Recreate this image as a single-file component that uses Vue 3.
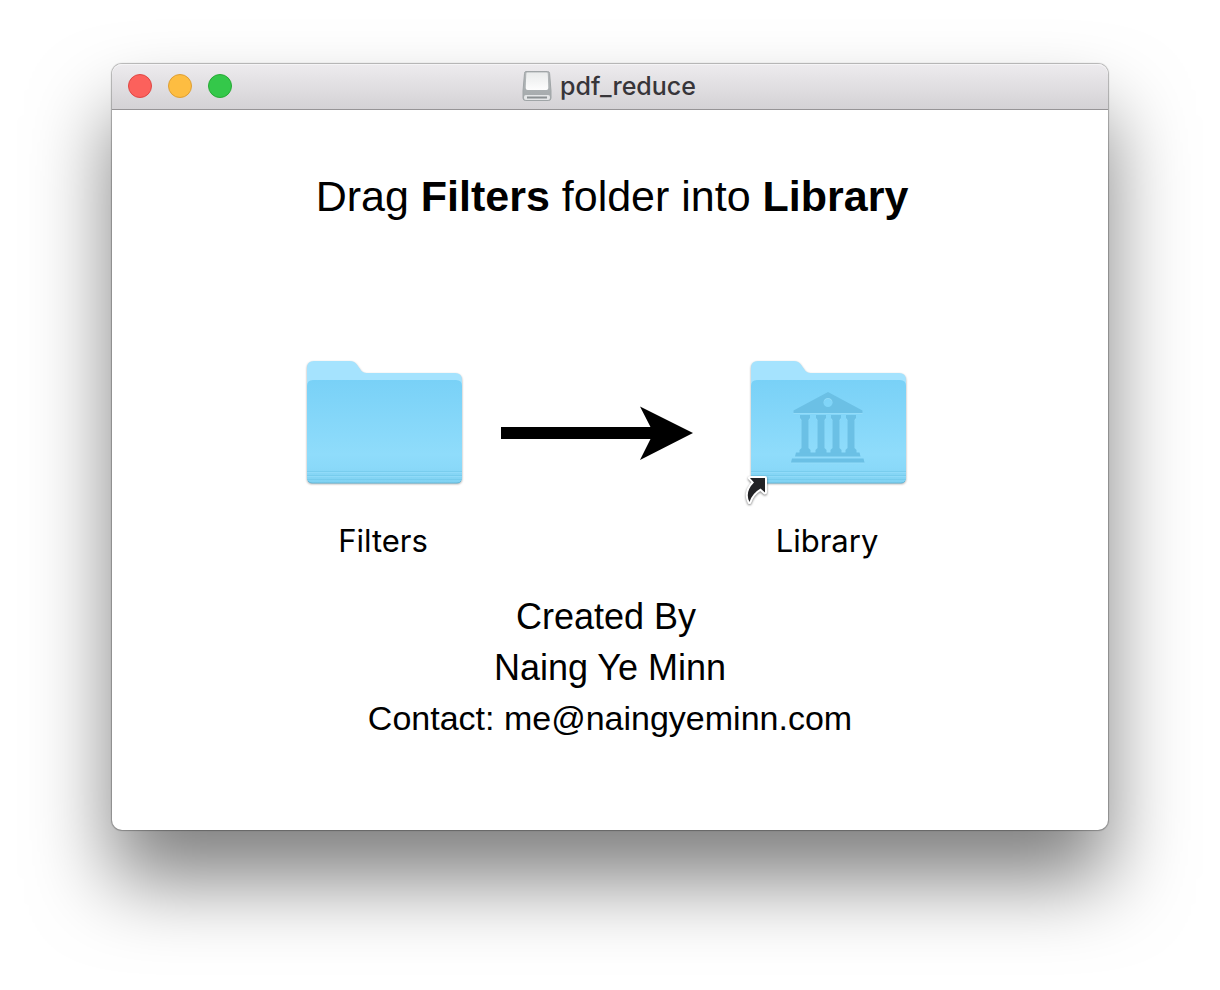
<script setup>
const credits = [
  { text: 'Created By', kind: 'caption' },
  { text: 'Naing Ye Minn', kind: 'author' },
  { text: 'Contact: me@naingyeminn.com', kind: 'contact' },
]
const columns = [56, 72, 87, 102]
const controls = [
  { name: 'Close', tone: 'close' },
  { name: 'Minimize', tone: 'minimize' },
  { name: 'Zoom', tone: 'zoom' },
]
const folders = [
  { name: 'Filters', library: false },
  { name: 'Library', library: true },
]
</script>

<template>
  <main class="desktop">
    <section class="window" aria-labelledby="window-title">
      <header class="titlebar">
        <div class="controls">
          <button v-for="c in controls" :key="c.name" type="button" :class="['control', c.tone]" :aria-label="c.name"></button>
        </div>
        <div class="title">
          <svg class="drive" width="30" height="32" viewBox="0 0 30 32" aria-hidden="true">
            <defs>
              <linearGradient id="drive-top" x1="0" y1="0" x2="0" y2="1">
                <stop offset="0" stop-color="#e9ebeb" />
                <stop offset="1" stop-color="#fdfdfd" />
              </linearGradient>
              <linearGradient id="drive-side" x1="0" y1="0" x2="0" y2="1">
                <stop offset="0" stop-color="#b4b8ba" />
                <stop offset="1" stop-color="#a4a9ab" />
              </linearGradient>
            </defs>
            <path d="M4 1.500h21.500q2 0 2.100 2L29 21v7q0 2.500-2.500 2.500h-23Q1 30.500 1 28v-7L2.500 3.500q.1-2 1.500-2z" fill="url(#drive-side)" stroke="#a0a5a7" />
            <path d="M5.500 2.500h19q1.200 0 1.300 1.200L26.300 18q0 2-2 2H5.700q-2 0-2-2L4.300 3.700q.1-1.200 1.200-1.200z" fill="url(#drive-top)" />
            <rect x="2" y="25" width="26" height="5" rx="2" fill="#e4e6e7" />
            <path d="M5 27.500h20" stroke="#8b9092" stroke-width="2" />
          </svg>
          <h1 id="window-title">pdf_reduce</h1>
        </div>
      </header>

      <div class="content">
        <p class="instruction">Drag <strong>Filters</strong> folder into <strong>Library</strong></p>

        <div class="transfer">
          <template v-for="(f, i) in folders" :key="f.name">
            <svg v-if="i === 1" class="arrow" width="212" height="156" viewBox="0 0 212 156" aria-hidden="true">
              <path d="M1 75h149.500L140 54.500 193 81l-53 27 10.500-21H1z" />
            </svg>
            <figure class="item">
              <svg width="168" height="156" viewBox="0 0 168 156" aria-hidden="true">
                <defs>
                  <linearGradient :id="'front' + i" x1="0" y1="0" x2="0" y2="1">
                    <stop offset="0" stop-color="#79d1f7" />
                    <stop offset=".72" stop-color="#8fdcfb" />
                    <stop offset=".85" stop-color="#8ad9f9" />
                    <stop offset="1" stop-color="#80d2f2" />
                  </linearGradient>
                </defs>
                <g class="folder">
                  <path d="M7 125V16q0-7 7-7h36q4 0 6.500 3l5 7q2 2 5 2H155q7 0 7 7v97z" fill="#a5e3fe" />
                  <path d="M7 34q0-6 6-6h143q6 0 6 6v92q0 5-5 5H12q-5 0-5-5z" :fill="`url(#front${i})`" />
                </g>
                <path d="M7 119.500h155M7 123.500h155M7 127.500h155" stroke="#70c6e8" stroke-opacity=".6" />
                <path d="M7 120.500h155M7 124.500h155" stroke="#9be0fb" stroke-opacity=".5" />
                <path d="M8 129q1.500 2 4 2h145q3 0 4-2" fill="none" stroke="#66b8d8" stroke-width="1" />
                <template v-if="f.library">
                  <g class="emblem">
                    <path fill-rule="evenodd" d="M84 40l34.500 18.500v2.500h-69v-2.500zM84 46a4.500 4.500 0 1 0 0 9 4.500 4.500 0 0 0 0-9z" />
                    <path v-for="x in columns" :key="x" :d="`M${x} 63h10v3l-1.500 2v28l2 2v3h-11v-3l2-2v-28l-1.500-2z`" />
                    <path d="M52 100.500h63.500l1 4h-65.500z" />
                    <path d="M48 106.500h71.500l1 4h-73.500z" />
                  </g>
                  <path class="shortcut" d="M6 126h15v14.500l-4.500-4Q8 141.500 5.500 150q-5-10 4.500-19.500z" />
                </template>
              </svg>
              <figcaption>{{ f.name }}</figcaption>
            </figure>
          </template>
        </div>

        <div class="credits">
          <p v-for="line in credits" :key="line.kind" :class="line.kind">{{ line.text }}</p>
        </div>
      </div>
    </section>
  </main>
</template>

<style>
body {
  margin: 0;
  background: #fff;
}
</style>

<style scoped>
.desktop {
  box-sizing: border-box;
  min-height: 100vh;
  padding: 64px 112px 160px;
  display: flex;
  overflow: hidden;
  color: #000;
  font-family: "Liberation Sans", Arial, sans-serif;
}
.window {
  flex: 1;
  display: flex;
  flex-direction: column;
  border-radius: 10px;
  background: #fff;
  box-shadow: 0 0 1px 1px rgba(0, 0, 0, 0.28), 0 50px 80px rgba(0, 0, 0, 0.5);
}
.titlebar {
  box-sizing: border-box;
  height: 46px;
  display: grid;
  grid-template-columns: 1fr auto 1fr;
  align-items: center;
  padding: 0 18px 1px 16px;
  border-bottom: 1px solid #969496;
  border-radius: 10px 10px 0 0;
  background: linear-gradient(#edebee, #d4d2d5);
  box-shadow: inset 0 1px #f5f4f6;
}
.controls {
  display: flex;
  gap: 16px;
}
.control {
  width: 24px;
  height: 24px;
  padding: 0;
  border: 1px solid;
  border-radius: 50%;
}
.close {
  background: #fc615c;
  border-color: #df4744;
}
.minimize {
  background: #fdbd41;
  border-color: #de9f34;
}
.zoom {
  background: #34c84a;
  border-color: #27aa35;
}
.title {
  display: flex;
  align-items: center;
  gap: 8px;
}
h1 {
  margin: 0;
  color: #373539;
  font: 500 25px/32px Inter, sans-serif;
}
.content {
  flex: 1;
  display: flex;
  flex-direction: column;
  align-items: center;
  padding: 60px 0 80px;
}
.instruction {
  margin: 0;
  padding-left: 4px;
  font-size: 43px;
  line-height: 52px;
}
.transfer {
  display: flex;
  gap: 32px;
  margin-top: 130px;
  padding-right: 8px;
}
.item {
  margin: 0;
  text-align: center;
}
.item svg,
.arrow {
  display: block;
  overflow: visible;
}
figcaption {
  margin-top: 13px;
  padding-right: 2px;
  font: 400 31px/40px Inter, sans-serif;
}
.folder {
  filter: drop-shadow(0 1px 1px rgba(0, 0, 0, 0.35));
}
.emblem {
  fill: #6bc0e5;
  filter: drop-shadow(0 1px 0 #93dcf9);
}
.shortcut {
  fill: #222225;
  stroke: #fff;
  stroke-width: 4px;
  stroke-linejoin: round;
  paint-order: stroke;
  filter: drop-shadow(0 1px 1px rgba(0, 0, 0, 0.5));
}
.credits {
  margin-top: 30px;
  font-size: 36px;
  line-height: 51px;
  text-align: center;
}
.credits p {
  margin: 0;
}
.credits .caption {
  padding-right: 8px;
}
.credits .contact {
  font-size: 34px;
}
</style>
